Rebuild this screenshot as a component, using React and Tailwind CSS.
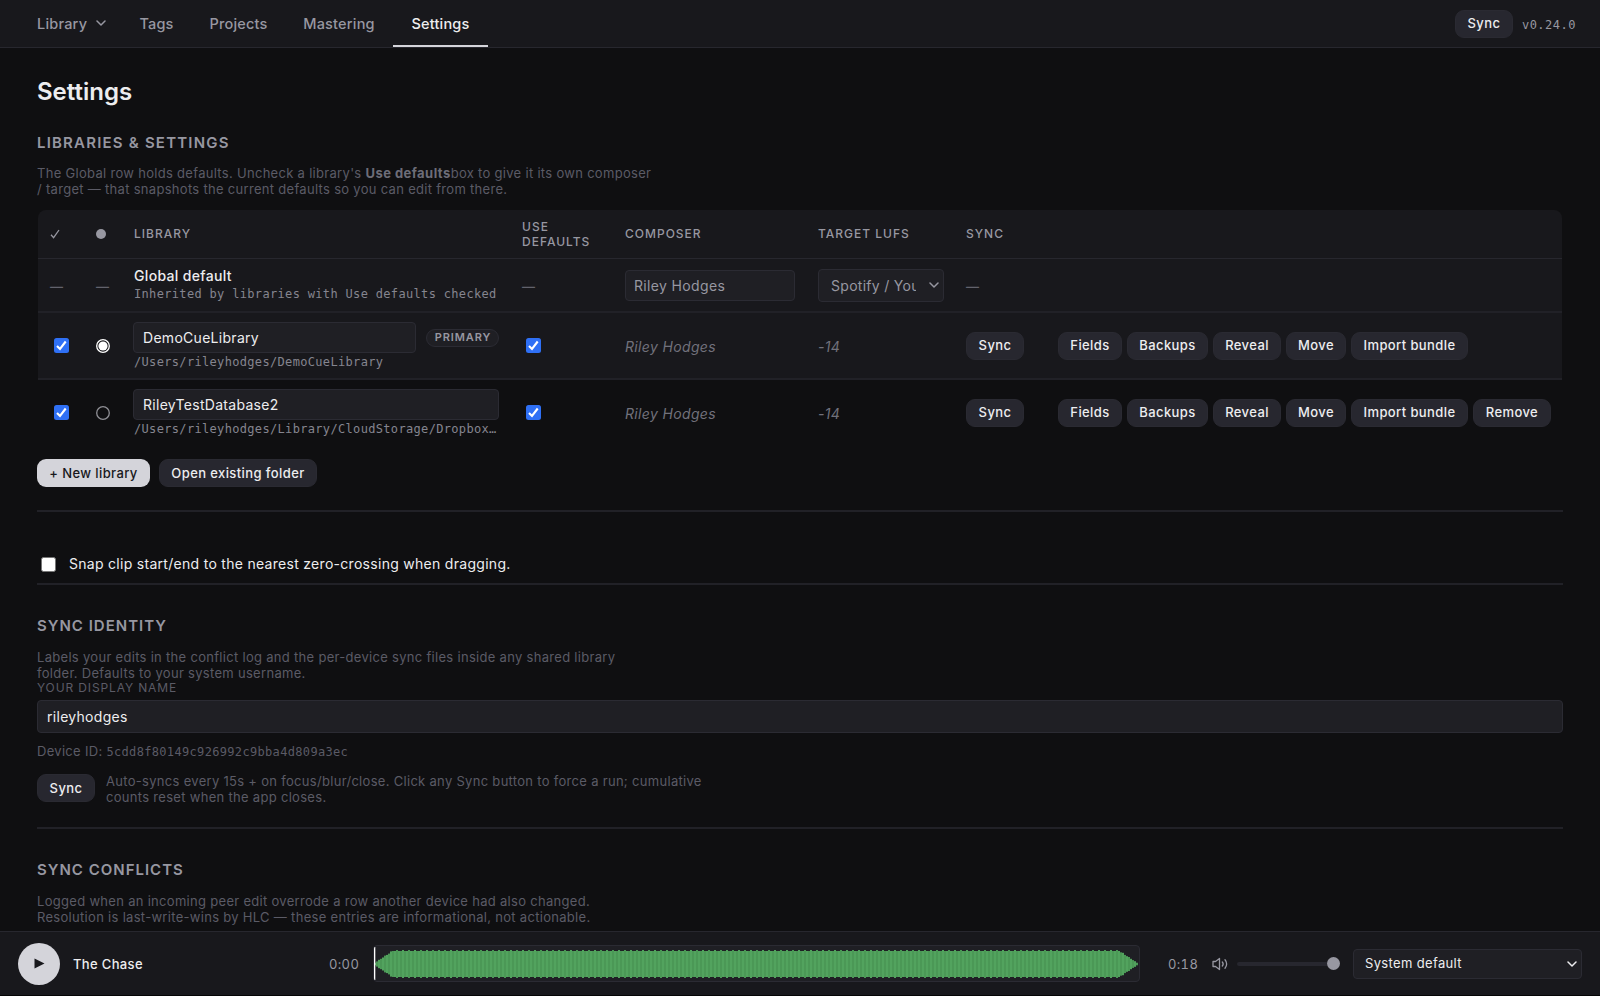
import React, { useState } from "react";

const NAV_ITEMS = ["Library", "Tags", "Projects", "Mastering", "Settings"];

const NAV_WIDTHS = {
  Library: "w-[84px]",
  Tags: "w-[71px]",
  Projects: "w-[93px]",
  Mastering: "w-[108px]",
  Settings: "w-[95px]",
};

const LIBRARIES = [
  {
    id: 1,
    name: "DemoCueLibrary",
    path: "/Users/rileyhodges/DemoCueLibrary",
    primary: true,
  },
  {
    id: 2,
    name: "RileyTestDatabase2",
    path: "/Users/rileyhodges/Library/CloudStorage/Dropbox-Personal/Cues",
    primary: false,
  },
];

const Chevron = ({ className }) => (
  <svg className={className} viewBox="0 0 10 6" fill="none">
    <path
      d="M1 1l4 4 4-4"
      stroke="currentColor"
      strokeWidth="1.5"
      strokeLinecap="round"
      strokeLinejoin="round"
    />
  </svg>
);

const Button = ({ children, className = "" }) => (
  <button
    className={`h-7 shrink-0 rounded-[9px] border border-[#2a2a32] bg-[#27272f] pt-px text-[13px] font-medium tracking-[0.4px] whitespace-nowrap text-[#ededef] ${className}`}
  >
    {children}
  </button>
);

const Checkbox = ({ checked }) => (
  <span
    className={`flex h-[15px] w-[15px] shrink-0 items-center justify-center rounded-[2.5px] ${
      checked ? "bg-[#2f70f5]" : "border border-[#767676] bg-white"
    }`}
  >
    {checked && (
      <svg className="h-[15px] w-[15px]" viewBox="0 0 15 15" fill="none">
        <path d="M3 7.9l3 3 5.7-7.4" stroke="#fff" strokeWidth="2.1" />
      </svg>
    )}
  </span>
);

const Radio = ({ checked }) => (
  <svg className="h-[14px] w-[14px]" viewBox="0 0 14 14" fill="none">
    <circle
      cx="7"
      cy="7"
      r="6.3"
      stroke={checked ? "#fff" : "#8f8f95"}
      strokeWidth="1.3"
    />
    {checked && <circle cx="7" cy="7" r="4.6" fill="#fff" />}
  </svg>
);

const SectionTitle = ({ children, className = "tracking-[1px]" }) => (
  <h2
    className={`text-[15px] leading-5 font-semibold text-[#9797a1] uppercase ${className}`}
  >
    {children}
  </h2>
);

const Hint = ({ children, className = "" }) => (
  <p
    className={`text-[13px] leading-4 tracking-[0.3px] whitespace-nowrap text-[#5b5b66] ${className}`}
  >
    {children}
  </p>
);

const Dash = () => <span className="text-[13px] font-semibold text-[#62626c]">—</span>;

const NavBar = () => {
  const [active, setActive] = useState("Settings");

  return (
    <nav className="flex h-12 shrink-0 items-center border-b border-[#27272e] bg-[#18181c] pr-6 pl-[37px]">
      <div className="flex h-full">
        {NAV_ITEMS.map((item) => (
          <button
            key={item}
            onClick={() => setActive(item)}
            className={`flex h-full items-center border-b-2 pt-0.5 text-[14.5px] font-medium tracking-[0.2px] ${
              NAV_WIDTHS[item]
            } ${item === "Library" ? "justify-start" : "justify-center"} ${
              active === item
                ? "border-[#d4d4da] text-[#ededef]"
                : "border-transparent text-[#9797a1]"
            }`}
          >
            {item}
            {item === "Library" && (
              <Chevron className="mb-0.5 ml-[9px] h-[6px] w-[10px]" />
            )}
          </button>
        ))}
      </div>
      <Button className="ml-auto w-[58px]">Sync</Button>
      <span className="ml-[9px] pt-0.5 font-['DejaVu_Sans_Mono',monospace] text-[12px] tracking-[0.5px] text-[#9797a1]">
        v0.24.0
      </span>
    </nav>
  );
};

const LibraryRow = ({ lib }) => (
  <tr
    className={
      lib.primary ? "h-[67px] border-b-2 border-[#212127] bg-[#18181c]" : "h-[66px]"
    }
  >
    <td className="pl-4">
      <Checkbox checked />
    </td>
    <td className="pl-3">
      <Radio checked={lib.primary} />
    </td>
    <td className="pt-px pr-[11px] pl-[11px]">
      <div className="flex items-center gap-2.5">
        <input
          className="h-[31px] min-w-0 flex-1 rounded-[4px] border border-[#2b2b33] bg-[#1f1f24] px-[9px] text-[14px] tracking-[0.29px] text-[#ededef]"
          defaultValue={lib.name}
        />
        {lib.primary && (
          <span className="flex h-[18px] w-[73px] items-center justify-center rounded-full border border-[#2b2b33] bg-[#1f1f24] pl-px text-[11px] font-semibold tracking-[0.9px] text-[#9797a1]">
            PRIMARY
          </span>
        )}
      </div>
      <div className="mt-px truncate pl-px font-['DejaVu_Sans_Mono',monospace] text-[12px] leading-4 tracking-[0.33px] text-[#85858f]">
        {lib.path}
      </div>
    </td>
    <td className="pl-4">
      <Checkbox checked />
    </td>
    <td className="pt-0.5 pl-3 text-[14px] tracking-[0.35px] text-[#71717b] italic">
      Riley Hodges
    </td>
    <td className="pt-0.5 pl-3 text-[14px] tracking-[0.35px] text-[#71717b] italic">
      -14
    </td>
    <td className="pl-3">
      <Button className="w-[58px]">Sync</Button>
    </td>
    <td className="pl-3">
      <div className="flex gap-[5px]">
        <Button className="w-[64px]">Fields</Button>
        <Button className="w-[81px]">Backups</Button>
        <Button className="w-[68px]">Reveal</Button>
        <Button className="w-[60px]">Move</Button>
        <Button className="w-[117px]">Import bundle</Button>
        {!lib.primary && <Button className="w-[78px]">Remove</Button>}
      </div>
    </td>
  </tr>
);

const LibraryTable = () => (
  <div className="mx-px mt-[13px] overflow-hidden rounded-t-lg">
    <table className="w-full table-fixed border-collapse text-left">
      <colgroup>
        <col className="w-[46px]" />
        <col className="w-[38px]" />
        <col className="w-[388px]" />
        <col className="w-[103px]" />
        <col className="w-[193px]" />
        <col className="w-[148px]" />
        <col className="w-[92px]" />
        <col />
      </colgroup>
      <thead>
        <tr className="h-12 border-b border-[#27272e] bg-[#18181c] text-[12px] leading-[15px] tracking-[1px] text-[#9797a1] [&>th]:pl-3 [&>th]:font-medium">
          <th>
            <svg className="h-[10px] w-[11px]" viewBox="0 0 11 10" fill="none">
              <path d="M1 5.8l2.6 2.9L9 1" stroke="currentColor" strokeWidth="1.3" />
            </svg>
          </th>
          <th>
            <span className="block h-[10px] w-[10px] rounded-full bg-[#9797a1]" />
          </th>
          <th>LIBRARY</th>
          <th>
            USE
            <br />
            DEFAULTS
          </th>
          <th>COMPOSER</th>
          <th>TARGET LUFS</th>
          <th>SYNC</th>
          <th></th>
        </tr>
      </thead>
      <tbody>
        <tr className="h-[54px] border-b-2 border-[#212127] bg-[#18181c] [&>td]:pt-px [&>td]:pl-3">
          <td>
            <Dash />
          </td>
          <td>
            <Dash />
          </td>
          <td>
            <div className="text-[14px] leading-[18px] font-medium tracking-[0.33px] text-[#ededef]">
              Global default
            </div>
            <div className="font-['DejaVu_Sans_Mono',monospace] text-[12px] leading-[18px] tracking-[0.33px] whitespace-nowrap text-[#85858f]">
              Inherited by libraries with Use defaults checked
            </div>
          </td>
          <td>
            <Dash />
          </td>
          <td>
            <input
              className="block h-[31px] w-[170px] rounded-[4px] border border-[#2b2b33] bg-[#1f1f24] px-2 text-[14px] tracking-[0.35px] text-[#9797a1]"
              defaultValue="Riley Hodges"
            />
          </td>
          <td>
            <div className="flex h-[33px] w-[126px] items-center justify-between rounded-[4px] border border-[#2b2b33] bg-[#1f1f24] pr-1 pl-3 text-[#9797a1]">
              <span className="w-[85px] overflow-hidden text-[14px] tracking-[0.29px] whitespace-nowrap">
                Spotify / YouTube
              </span>
              <Chevron className="h-[6px] w-[10px]" />
            </div>
          </td>
          <td>
            <Dash />
          </td>
          <td></td>
        </tr>
        {LIBRARIES.map((lib) => (
          <LibraryRow key={lib.id} lib={lib} />
        ))}
      </tbody>
    </table>
  </div>
);

// Bars ramp up at the start and fall off at the end of the clip
const Waveform = () => {
  const count = 382;
  const bars = [];
  for (let i = 0; i < count; i++) {
    const ramp = Math.min(1, (i + 1) / 10, (count - i) / 10);
    const peak = i % 6 === 2 || i % 6 === 5 ? 14 : 13;
    bars.push({ x: i * 2, h: Math.max(1, ramp * peak), dark: i % 2 === 1 });
  }

  return (
    <div className="ml-[14px] h-[37px] w-[767px] overflow-hidden rounded-[4px] border border-[#2b2b33] bg-[#1f1f24]">
      <svg className="h-[35px] w-[765px]" viewBox="0 0 765 35">
        {bars.map((bar) => (
          <rect
            key={bar.x}
            x={bar.x}
            y={18 - bar.h}
            width="2"
            height={bar.h * 2}
            fill={bar.dark ? "#4b9856" : "#52a35e"}
          />
        ))}
        <rect x="0" y="1" width="1.3" height="33" fill="#fff" />
      </svg>
    </div>
  );
};

const Player = () => (
  <footer className="flex h-16 shrink-0 items-center border-t border-[#27272e] bg-[#18181c] pl-[18px] tracking-[0.35px]">
    <button className="flex h-[42px] w-[42px] items-center justify-center rounded-full bg-[#d4d4da]">
      <svg className="h-[11px] w-[11px]" viewBox="0 0 11 11">
        <path d="M0.5 0.5L10.5 5.5L0.5 10.5Z" fill="#18181c" />
      </svg>
    </button>
    <span className="ml-[13px] w-[242px] pt-0.5 text-[13px] font-medium text-[#ededef]">
      The Chase
    </span>
    <span className="ml-[14px] w-[30px] pt-0.5 text-[13px] text-[#9797a1] tabular-nums">
      0:00
    </span>
    <Waveform />
    <span className="ml-[28px] w-[30px] pt-0.5 text-[13px] text-[#9797a1] tabular-nums">
      0:18
    </span>
    <svg
      className="ml-[14px] h-[14px] w-[17px] text-[#9797a1]"
      viewBox="0 0 17 14"
      fill="none"
      stroke="currentColor"
      strokeWidth="1.3"
      strokeLinejoin="round"
    >
      <path d="M1 4.5H3.5L7.5 1.5V12.5L3.5 9.5H1Z" />
      <path d="M10.3 5a3 3 0 0 1 0 4" strokeLinecap="round" />
      <path d="M13 2.8a6.2 6.2 0 0 1 0 8.4" strokeLinecap="round" />
    </svg>
    <div className="ml-[8px] flex w-[103px] items-center">
      <div className="h-1 flex-1 rounded-l-full bg-[#27272f]" />
      <div className="h-[13px] w-[13px] rounded-full bg-[#9797a1]" />
    </div>
    <div className="ml-[13px] flex h-[30px] w-[229px] items-center justify-between rounded-[4px] border border-[#2b2b33] bg-[#1f1f24] pr-1 pl-[11px] text-[#ededef]">
      <span className="pt-px text-[13px]">System default</span>
      <Chevron className="h-[6px] w-[10px]" />
    </div>
  </footer>
);

const App = () => {
  return (
    <div className="flex h-[996px] w-[1600px] flex-col overflow-hidden border-b border-[#050506] bg-[#0f0f11] font-['Inter',sans-serif] text-[#ededef]">
      <NavBar />

      <main className="min-h-0 flex-1 overflow-hidden px-[37px]">
        <h1 className="mt-[28px] text-[24px] leading-8 font-semibold">Settings</h1>

        <section className="mt-[25px] border-b-2 border-[#212127] pb-[23px]">
          <SectionTitle className="tracking-[1.2px]">
            Libraries &amp; Settings
          </SectionTitle>
          <Hint className="mt-[12px]">
            The Global row holds defaults. Uncheck a library's{" "}
            <strong className="font-bold tracking-[0.45px] text-[#6d6d78]">
              Use defaults
            </strong>
            box to give it its own composer
            <br />/ target — that snapshots the current defaults so you can edit from
            there.
          </Hint>
          <LibraryTable />
          <div className="mt-[14px] flex gap-[9px]">
            <button className="h-7 w-[113px] rounded-[9px] bg-[#d4d4da] pt-px text-[13px] font-medium tracking-[0.4px] whitespace-nowrap text-[#18181c]">
              + New library
            </button>
            <Button className="w-[158px]">Open existing folder</Button>
          </div>
        </section>

        <section className="flex h-[73px] items-end border-b-2 border-[#212127] pb-[9px]">
          <label className="flex items-center gap-[13px] pl-1 text-[14px] leading-5 tracking-[0.29px]">
            <Checkbox checked={false} />
            Snap clip start/end to the nearest zero-crossing when dragging.
          </label>
        </section>

        <section className="mt-[31px] border-b-2 border-[#212127] pb-[22px]">
          <SectionTitle>Sync Identity</SectionTitle>
          <Hint className="mt-[13px]">
            Labels your edits in the conflict log and the per-device sync files inside
            any shared library
            <br />
            folder. Defaults to your system username.
          </Hint>
          <div className="text-[12px] leading-[14px] tracking-[0.87px] text-[#5b5b66]">
            YOUR DISPLAY NAME
          </div>
          <input
            className="mt-[5px] block h-[33px] w-full rounded-[4px] border border-[#2b2b33] bg-[#1f1f24] px-[9px] text-[14px] tracking-[0.29px] text-[#ededef]"
            defaultValue="rileyhodges"
          />
          <Hint className="mt-[10px]">
            Device ID:{" "}
            <span className="font-['DejaVu_Sans_Mono',monospace] text-[12px] tracking-[0.33px]">
              5cdd8f80149c926992c9bba4d809a3ec
            </span>
          </Hint>
          <div className="mt-[13px] flex items-center gap-[11px]">
            <Button className="mb-0.5 w-[58px]">Sync</Button>
            <Hint>
              Auto-syncs every 15s + on focus/blur/close. Click any Sync button to force
              a run; cumulative
              <br />
              counts reset when the app closes.
            </Hint>
          </div>
        </section>

        <section className="mt-[31px]">
          <SectionTitle>Sync Conflicts</SectionTitle>
          <Hint className="mt-[13px]">
            Logged when an incoming peer edit overrode a row another device had also
            changed.
            <br />
            Resolution is last-write-wins by HLC — these entries are informational, not
            actionable.
          </Hint>
        </section>
      </main>

      <Player />
    </div>
  );
};

export default App;
